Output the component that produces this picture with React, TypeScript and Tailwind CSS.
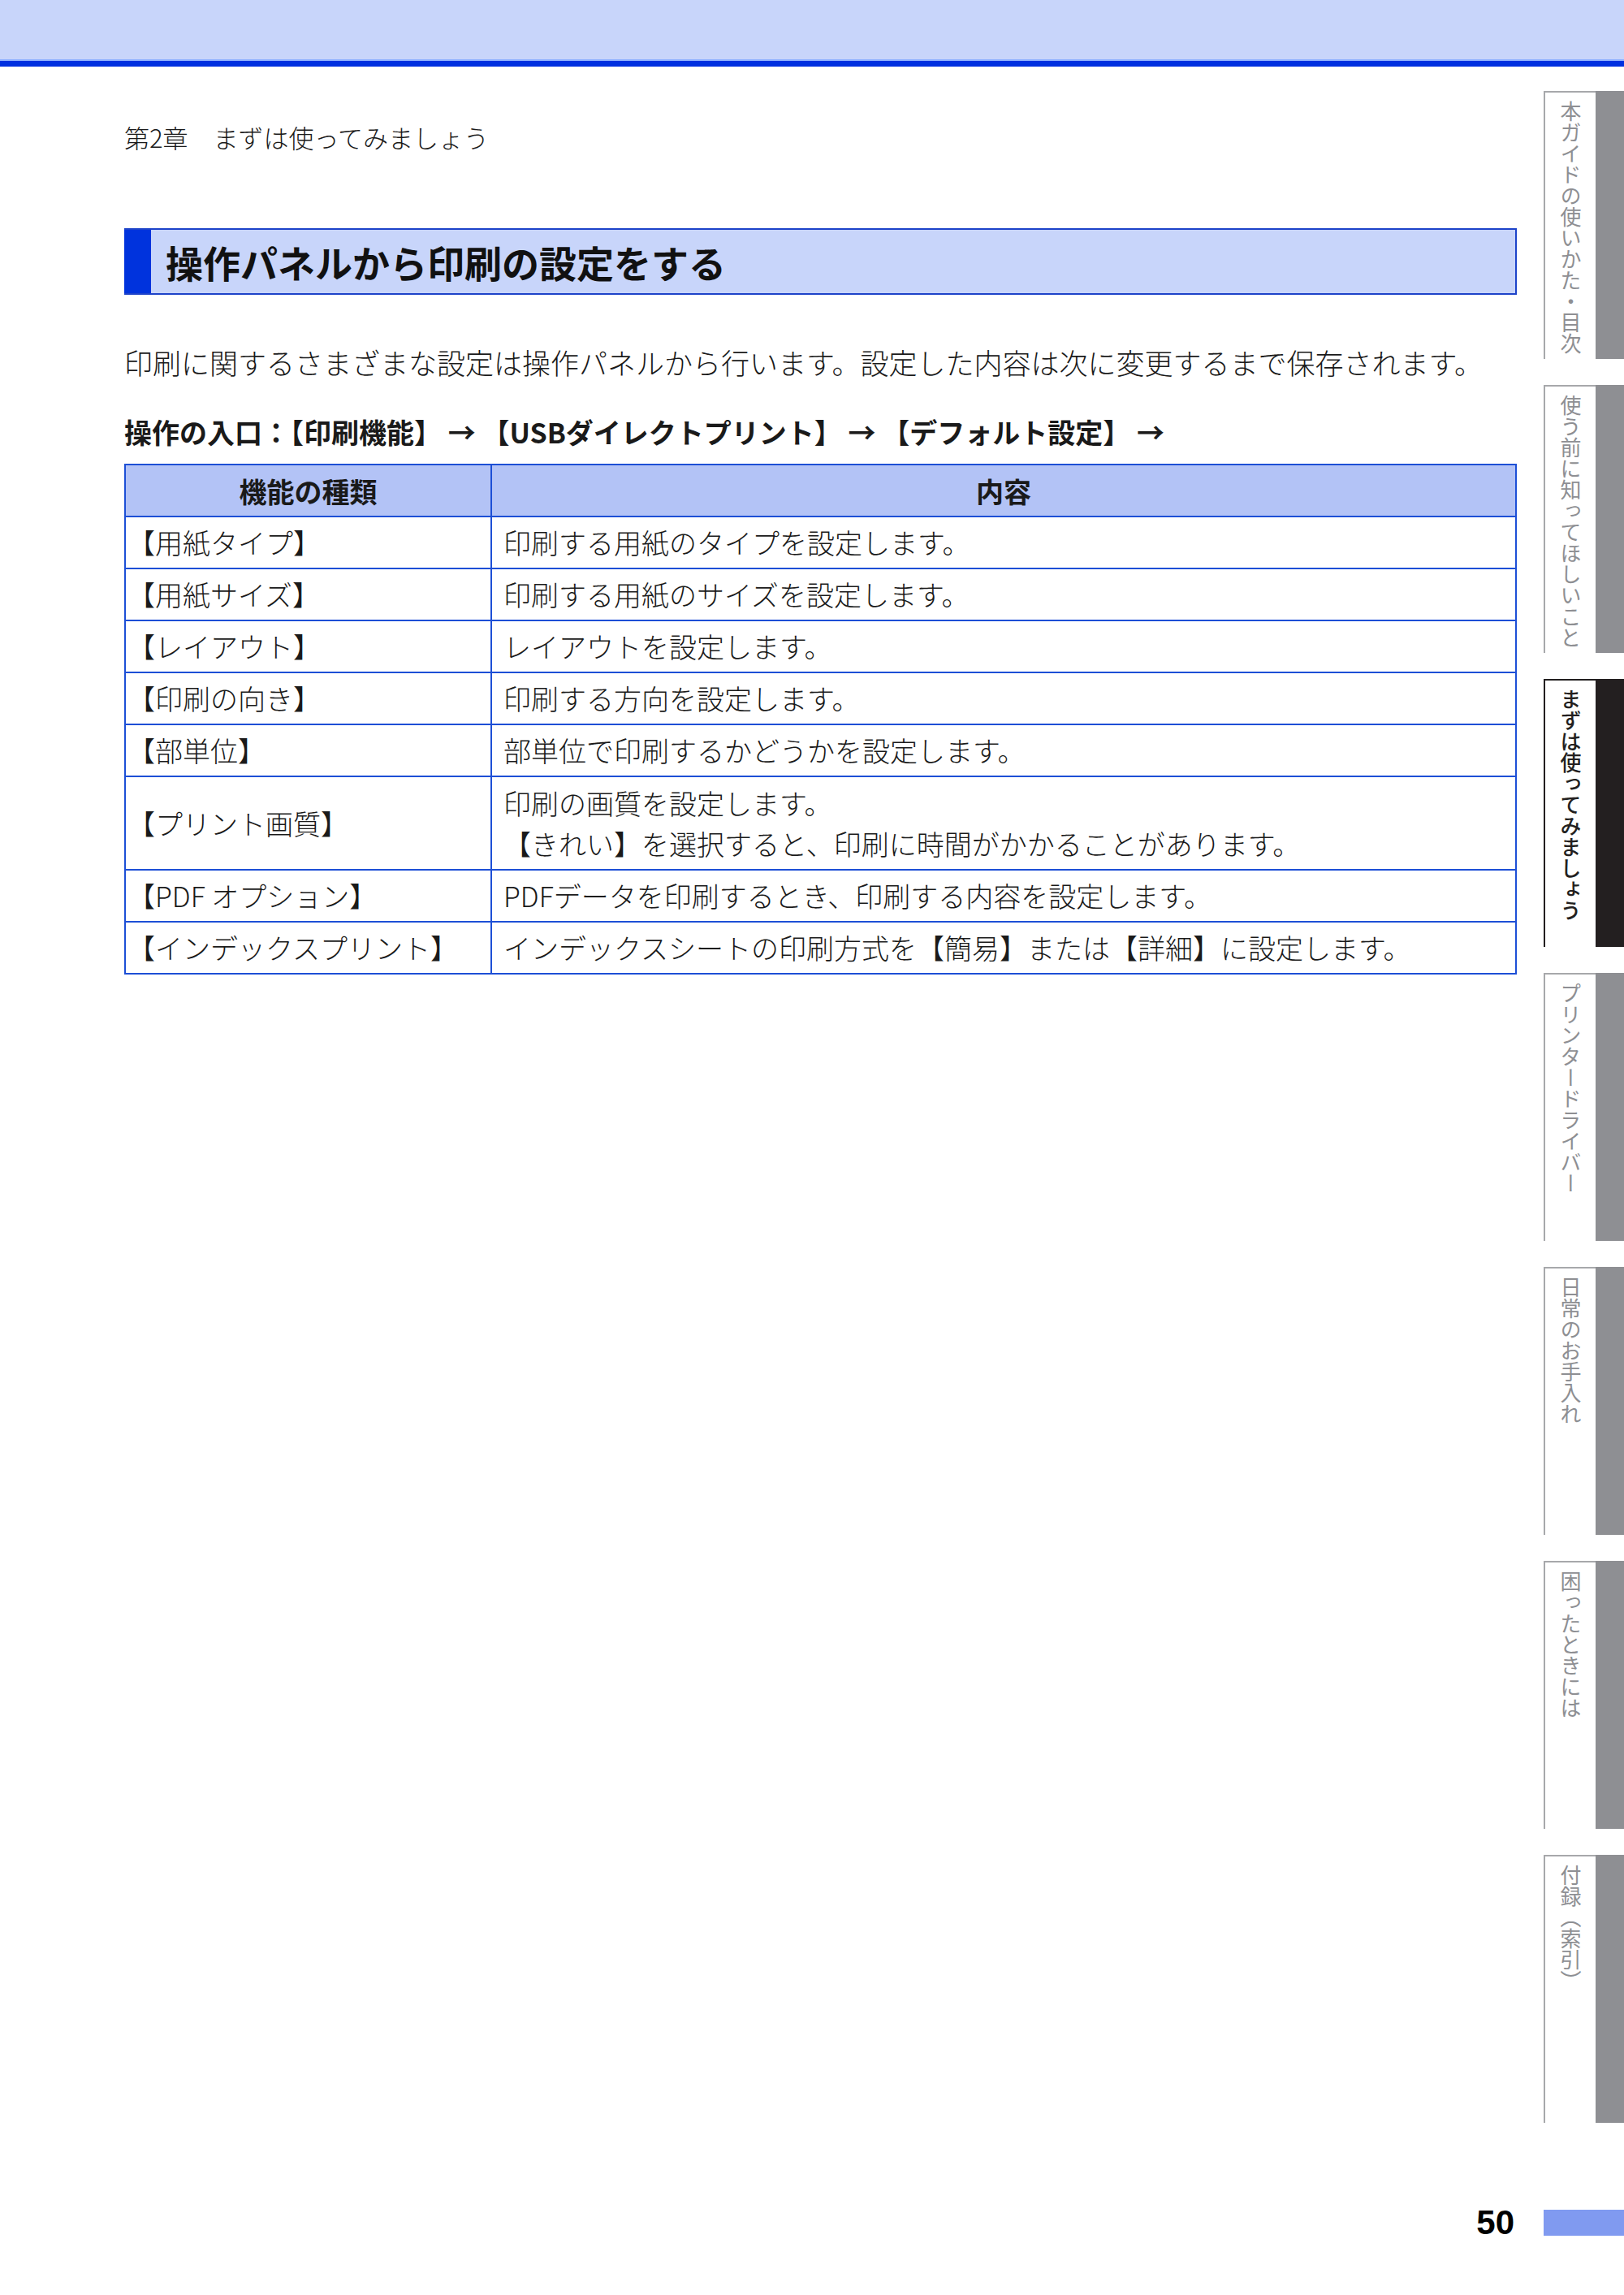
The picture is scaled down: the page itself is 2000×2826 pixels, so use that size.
import React from 'react';

const tabs: { label: string; active?: boolean }[] = [
  { label: '本ガイドの使いかた・目次' },
  { label: '使う前に知ってほしいこと' },
  { label: 'まずは使ってみましょう', active: true },
  { label: 'プリンタードライバー' },
  { label: '日常のお手入れ' },
  { label: '困ったときには' },
  { label: '付録（索引）' },
];

const rows: { name: string; desc: string[] }[] = [
  { name: '【用紙タイプ】', desc: ['印刷する用紙のタイプを設定します。'] },
  { name: '【用紙サイズ】', desc: ['印刷する用紙のサイズを設定します。'] },
  { name: '【レイアウト】', desc: ['レイアウトを設定します。'] },
  { name: '【印刷の向き】', desc: ['印刷する方向を設定します。'] },
  { name: '【部単位】', desc: ['部単位で印刷するかどうかを設定します。'] },
  {
    name: '【プリント画質】',
    desc: ['印刷の画質を設定します。', '【きれい】を選択すると、印刷に時間がかかることがあります。'],
  },
  { name: '【PDF オプション】', desc: ['PDFデータを印刷するとき、印刷する内容を設定します。'] },
  { name: '【インデックスプリント】', desc: ['インデックスシートの印刷方式を【簡易】または【詳細】に設定します。'] },
];

function Tab({ label, active }: { label: string; active?: boolean }) {
  return (
    <div className="flex h-[330px]">
      <div
        className={
          active
            ? 'w-[64px] border-l-2 border-t-2 border-[#231f20] bg-white flex justify-center pt-[10px]'
            : 'w-[64px] border-l-2 border-t-2 border-[#a7a8ab] bg-white flex justify-center pt-[10px]'
        }
      >
        <span
          className={
            active
              ? '[writing-mode:vertical-rl] whitespace-nowrap text-[26px] leading-[32px] text-[#231f20] font-medium'
              : '[writing-mode:vertical-rl] whitespace-nowrap text-[26px] leading-[32px] text-[#8e8f93]'
          }
        >
          {label}
        </span>
      </div>
      <div className={active ? 'flex-1 bg-[#231f20]' : 'flex-1 bg-[#8e8f93]'} />
    </div>
  );
}

export default function App() {
  return (
    <div className="w-[2000px] h-[2826px] bg-white text-[#1a1a1a] font-['Noto_Sans_CJK_JP','Noto_Sans',sans-serif] overflow-hidden">
      <div className="h-[73px] bg-[#c8d5fa]" />
      <div className="h-[2px] bg-[#8fb1ff]" />
      <div className="h-[7px] bg-[#0030e0]" />

      <div className="flex">
        <main className="w-[1868px] pl-[153px] pt-[64px]">
          <div className="text-[31px] leading-[45px] font-light">第2章　まずは使ってみましょう</div>

          <div className="mt-[90px] flex h-[82px] border-y-2 border-r-2 border-[#1d43c9] bg-[#c8d5fa]">
            <div className="w-[33px] bg-[#0033dd]" />
            <h1 className="pl-[18px] flex items-center text-[46px] font-bold leading-none text-[#111]">
              操作パネルから印刷の設定をする
            </h1>
          </div>

          <p className="mt-[58px] text-[35px] leading-[50px] font-light">
            印刷に関するさまざまな設定は操作パネルから行います。設定した内容は次に変更するまで保存されます。
          </p>

          <p className="mt-[36px] text-[34px] leading-[50px] font-bold">
            操作の入口：【印刷機能】 → 【USBダイレクトプリント】 → 【デフォルト設定】 →
          </p>

          <table className="mt-[14px] w-[1715px] border-collapse border-2 border-[#1d43c9] text-[34px] font-light">
            <thead>
              <tr className="bg-[#b3c3f6] h-[64px]">
                <th className="w-[451px] border-2 border-[#1d4fd6] font-bold text-center">機能の種類</th>
                <th className="border-2 border-[#1d4fd6] font-bold text-center">内容</th>
              </tr>
            </thead>
            <tbody>
              {rows.map((r) => (
                <tr key={r.name} className={r.desc.length > 1 ? 'h-[115px]' : 'h-[64px]'}>
                  <td className="border-2 border-[#1d4fd6] pl-[2px] align-middle leading-[50px]">{r.name}</td>
                  <td className="border-2 border-[#1d4fd6] pl-[14px] align-middle leading-[50px]">
                    {r.desc.map((d) => (
                      <div key={d}>{d}</div>
                    ))}
                  </td>
                </tr>
              ))}
            </tbody>
          </table>
        </main>

        <aside className="ml-[33px] w-[99px] pt-[30px] flex flex-col gap-[32px]">
          {tabs.map((t) => (
            <Tab key={t.label} label={t.label} active={t.active} />
          ))}
        </aside>
      </div>

      <div className="mt-[102px] flex items-center justify-end">
        <span className="font-['Liberation_Sans',sans-serif] font-bold text-[42px] leading-none text-black mr-[36px]">
          50
        </span>
        <div className="w-[99px] h-[32px] bg-[#809af0]" />
      </div>
    </div>
  );
}
